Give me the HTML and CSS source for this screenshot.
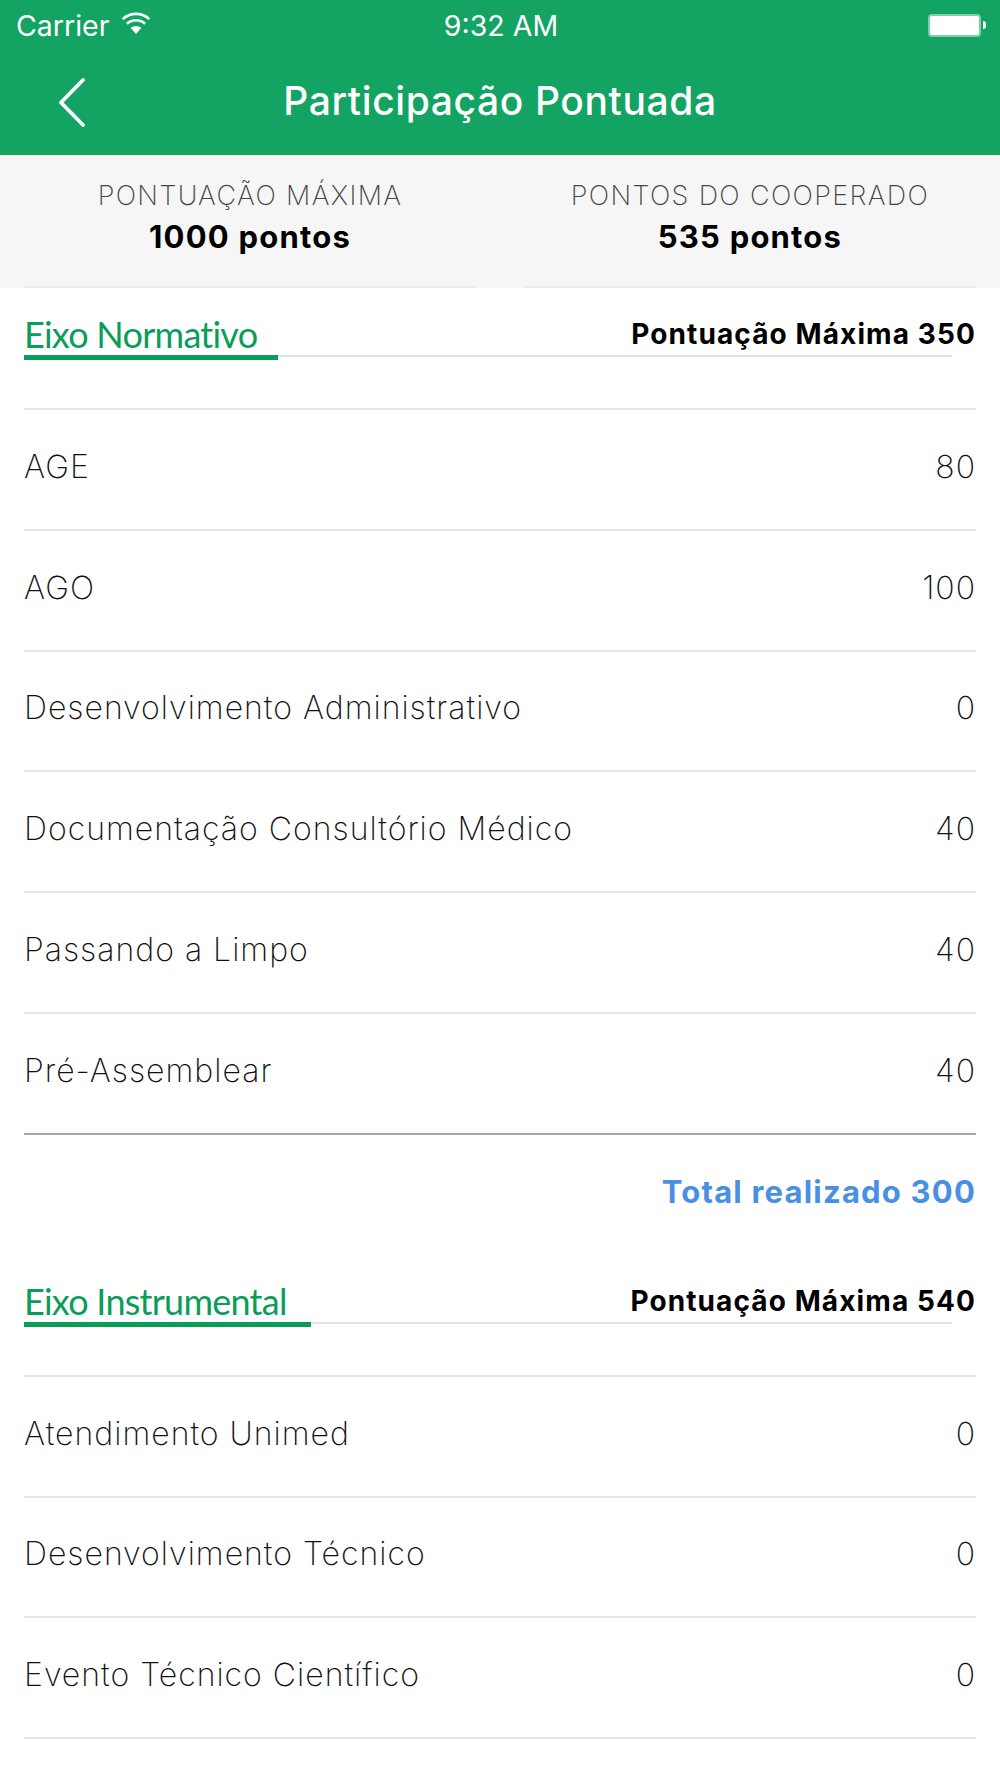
FILE: index.html
```html
<!DOCTYPE html>
<html lang="pt-BR">
<head>
<meta charset="utf-8">
<title>Participação Pontuada</title>
<link rel="stylesheet" href="styles.css">
</head>
<body>
<div class="screen">
  <header class="topbar">
    <div class="status">
      <div class="status-left">
        <span>Carrier</span>
        <svg class="wifi" viewBox="0 0 30 22" aria-hidden="true"><path d="M15 22 L9.6 16 A8 8 0 0 1 20.4 16 Z" fill="#fff"/><path d="M5.9 11.8 A13.5 13.5 0 0 1 24.1 11.8" fill="none" stroke="#fff" stroke-width="2.6"/><path d="M1.7 7.1 A19.6 19.6 0 0 1 28.3 7.1" fill="none" stroke="#fff" stroke-width="2.6"/></svg>
      </div>
      <div class="status-time">9:32 AM</div>
      <div class="status-right">
        <div class="battery"></div><div class="battery-nub"></div>
      </div>
    </div>
    <div class="nav">
      <svg class="back" viewBox="0 0 28 50" aria-hidden="true"><path d="M25 3 L3 25.5 L25 48" fill="none" stroke="#fff" stroke-width="3.8" stroke-linecap="round" stroke-linejoin="round"/></svg>
      <h1 class="nav-title">Participação Pontuada</h1>
    </div>
  </header>

  <section class="stats">
    <div class="stat"><div class="stat-label">PONTUAÇÃO MÁXIMA</div><div class="stat-value">1000 pontos</div></div>
    <div class="stat"><div class="stat-label">PONTOS DO COOPERADO</div><div class="stat-value">535 pontos</div></div>
  </section>

  <section class="group">
    <div class="group-head">
      <h2 class="group-title">Eixo Normativo</h2>
      <div class="group-max">Pontuação Máxima 350</div>
    </div>
    <div class="track"><div class="fill fill-normativo"></div></div>
    <ul class="rows">
      <li class="row"><span>AGE</span><span>80</span></li>
      <li class="row"><span>AGO</span><span>100</span></li>
      <li class="row"><span>Desenvolvimento Administrativo</span><span>0</span></li>
      <li class="row"><span>Documentação Consultório Médico</span><span>40</span></li>
      <li class="row"><span>Passando a Limpo</span><span>40</span></li>
      <li class="row row-last"><span>Pré-Assemblear</span><span>40</span></li>
    </ul>
    <div class="total">Total realizado 300</div>
  </section>

  <section class="group">
    <div class="group-head">
      <h2 class="group-title">Eixo Instrumental</h2>
      <div class="group-max">Pontuação Máxima 540</div>
    </div>
    <div class="track"><div class="fill fill-instrumental"></div></div>
    <ul class="rows">
      <li class="row"><span>Atendimento Unimed</span><span>0</span></li>
      <li class="row"><span>Desenvolvimento Técnico</span><span>0</span></li>
      <li class="row"><span>Evento Técnico Científico</span><span>0</span></li>
    </ul>
  </section>
</div>
</body>
</html>
```
FILE: styles.css
```css
* { box-sizing: border-box; }
html, body { margin: 0; padding: 0; background: #fff; }
.screen { width: 1000px; height: 1778px; overflow: hidden; font-family: "Inter", "Liberation Sans", sans-serif; color: #111; }

.topbar { background: #13a363; height: 155px; color: #fff; }
.status { height: 50px; display: grid; grid-template-columns: 1fr auto 1fr; align-items: center; padding: 0 14px 0 16px; font-family: "Inter", sans-serif; font-size: 28.5px; }
.status-left { display: flex; align-items: center; gap: 12px; }
.wifi { width: 30px; height: 22px; margin-top: -4px; }
.status-right { display: flex; justify-content: flex-end; align-items: center; }
.battery { width: 53px; height: 23px; background: #fff; border: 2px solid #7fd0aa; border-radius: 4px; }
.battery-nub { width: 3px; height: 8px; margin-left: 2px; background: #fff; border-radius: 0 3px 3px 0; }

.nav { height: 105px; position: relative; display: flex; justify-content: center; align-items: center; padding-bottom: 4px; }
.back { position: absolute; left: 58px; top: 27px; width: 28px; height: 50px; }
.nav-title { margin: 0; font-size: 39px; font-weight: 500; letter-spacing: 0.6px; }

.stats { background: #f6f6f6; height: 133px; padding: 0 24px; display: grid; grid-template-columns: 1fr 1fr; gap: 48px; }
.stat { border-bottom: 2px solid #ececec; text-align: center; padding-top: 25px; }
.stat-label { font-size: 27px; font-weight: 250; color: #444; line-height: 32px; letter-spacing: 1.35px; }
.stat-value { font-size: 31px; font-weight: 700; color: #000; line-height: 36px; margin-top: 7px; letter-spacing: 1.2px; }

.group { padding: 0 24px; }
.group-head { display: flex; justify-content: space-between; align-items: flex-end; height: 67px; }
.group-title { margin: 0; font-family: "Lato", "Liberation Sans", sans-serif; font-size: 36px; font-weight: 400; color: #0a9d5a; line-height: 44px; margin-bottom: -1px; letter-spacing: -0.75px; }
.group-max { font-size: 28px; font-weight: 700; color: #000; line-height: 36px; margin-bottom: 3px; letter-spacing: 1.1px; }
.track { height: 2px; margin-right: 24px; background: #e4e4e4; margin-bottom: 51px; }
.fill { height: 5px; background: #0a9d5a; }
.fill-normativo { width: 254px; }
.fill-instrumental { width: 287px; }

.rows { list-style: none; margin: 0; padding: 0; border-top: 2px solid #e6e6e6; }
.row { height: 120.8px; padding-bottom: 6px; display: flex; justify-content: space-between; align-items: center; border-bottom: 2px solid #e6e6e6; font-size: 32px; font-weight: 250; color: #111; letter-spacing: 1px; }
.row-last { border-bottom-color: #a6a6a6; }
.total { height: 120px; padding-bottom: 7px; display: flex; justify-content: flex-end; align-items: center; font-size: 31px; font-weight: 700; color: #4a90e2; letter-spacing: 1.2px; }
```
